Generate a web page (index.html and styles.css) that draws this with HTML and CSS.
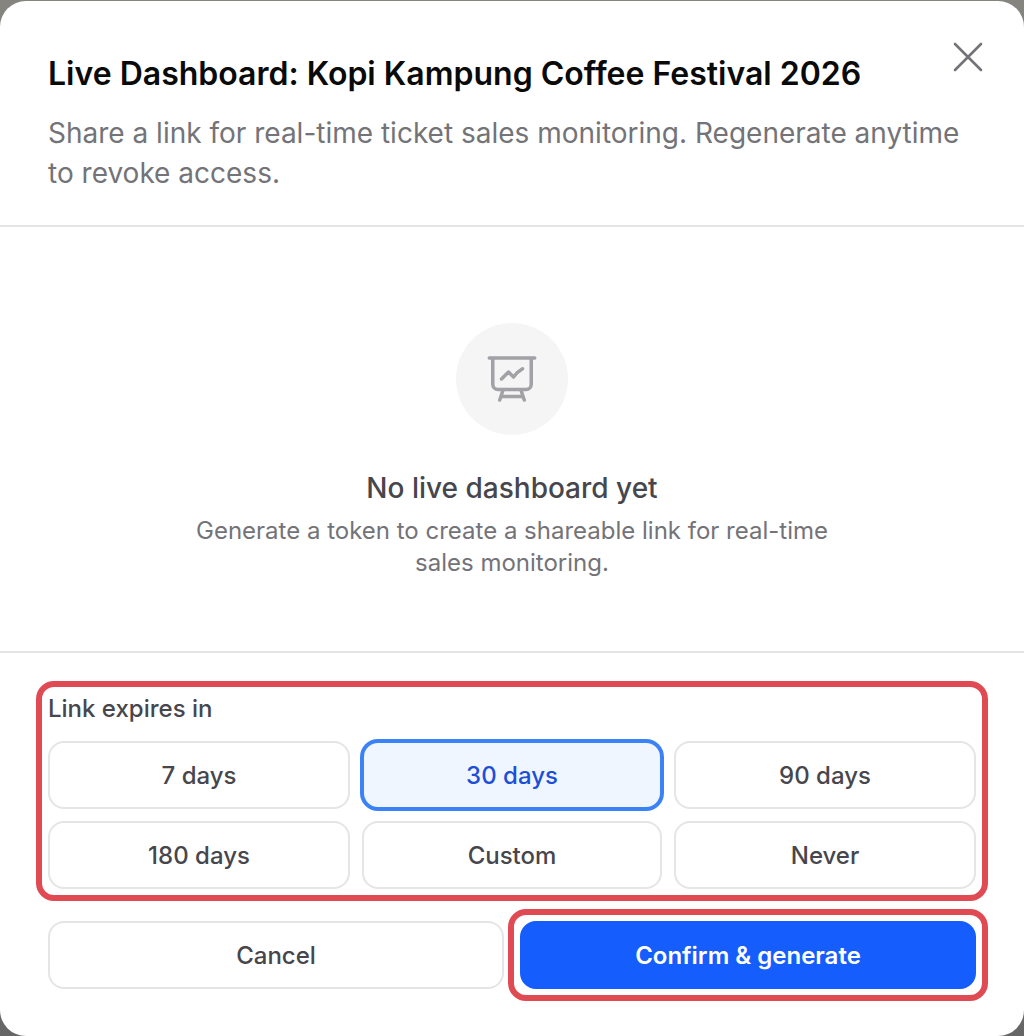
FILE: index.html
```html
<!DOCTYPE html>
<html lang="en">
<head>
<meta charset="utf-8">
<title>Live Dashboard</title>
<link rel="stylesheet" href="styles.css">
</head>
<body>
<div class="modal">
  <header class="modal-header">
    <h1 class="modal-title">Live Dashboard: Kopi Kampung Coffee Festival 2026</h1>
    <p class="modal-subtitle">Share a link for real-time ticket sales monitoring. Regenerate anytime to revoke access.</p>
    <button class="close" type="button" aria-label="Close">
      <svg viewBox="0 0 32 32" width="32" height="32" fill="none" stroke="currentColor" stroke-width="2.6" stroke-linecap="round"><path d="M3 3l26 26M29 3L3 29"/></svg>
    </button>
  </header>
  <main class="empty">
    <div class="empty-icon">
      <svg viewBox="0 0 24 24" width="56" height="56" fill="none" stroke="currentColor" stroke-width="1.5" stroke-linecap="round" stroke-linejoin="round"><path d="M3.75 3v11.25A2.25 2.25 0 0 0 6 16.5h2.25M3.75 3h-1.5m1.5 0h16.5m0 0h1.5m-1.5 0v11.25A2.25 2.25 0 0 1 18 16.5h-2.25m-7.5 0h7.5m-7.5 0-1 3m8.5-3 1 3m0 0 .5 1.5m-.5-1.5h-9.5m0 0-.5 1.5m.75-9 3-3 2.148 2.148A12.061 12.061 0 0 1 16.5 7.605"/></svg>
    </div>
    <h2 class="empty-title">No live dashboard yet</h2>
    <p class="empty-text">Generate a token to create a shareable link for real-time sales monitoring.</p>
  </main>
  <footer class="modal-footer">
    <section class="expiry marked">
      <div class="expiry-label">Link expires in</div>
      <div class="expiry-grid">
        <button class="btn" type="button">7 days</button>
        <button class="btn selected" type="button">30 days</button>
        <button class="btn" type="button">90 days</button>
        <button class="btn" type="button">180 days</button>
        <button class="btn" type="button">Custom</button>
        <button class="btn" type="button">Never</button>
      </div>
    </section>
    <div class="actions">
      <button class="btn" type="button">Cancel</button>
      <button class="btn primary marked" type="button">Confirm &amp; generate</button>
    </div>
  </footer>
</div>
</body>
</html>
```

FILE: styles.css
```css
* { box-sizing: border-box; }
html, body { height: 100%; }
body {
  margin: 0;
  height: 1036px;
  overflow: hidden;
  background: linear-gradient(180deg, #85847e 0%, #666666 100%);
  font-family: Inter, "Liberation Sans", sans-serif;
  padding-top: 1px;
}
.modal {
  width: 1024px;
  height: 1035px;
  background: #fff;
  border-radius: 26px;
  overflow: hidden;
  display: flex;
  flex-direction: column;
}
.modal-header {
  position: relative;
  padding: 48px 48px 32px;
  border-bottom: 2px solid #e5e5e5;
  display: flex;
  flex-direction: column;
  gap: 14px;
}
.modal-title {
  margin: 0;
  font-size: 32px;
  line-height: 50px;
  font-weight: 600;
  color: #0a0a0a;
}
.modal-subtitle {
  margin: 0;
  font-size: 28px;
  line-height: 40px;
  color: #737378;
}
.close {
  position: absolute;
  top: 40px;
  right: 40px;
  width: 32px;
  height: 32px;
  padding: 0;
  border: 0;
  background: none;
  color: #737378;
}
.close svg { display: block; }
.empty {
  flex: 1;
  padding: 96px 48px 72px;
  display: flex;
  flex-direction: column;
  align-items: center;
  text-align: center;
}
.empty-icon {
  width: 112px;
  height: 112px;
  border-radius: 50%;
  background: #f5f5f5;
  color: #a1a1a6;
  display: flex;
  align-items: center;
  justify-content: center;
  margin-bottom: 32px;
}
.empty-title {
  margin: 0 0 6px;
  font-size: 28px;
  line-height: 42px;
  font-weight: 500;
  color: #46464c;
}
.empty-text {
  margin: 0;
  max-width: 672px;
  font-size: 24px;
  line-height: 32px;
  color: #737378;
}
.modal-footer {
  padding: 40px 48px 47px;
  border-top: 2px solid #e5e5e5;
  display: flex;
  flex-direction: column;
  gap: 32px;
}
.expiry {
  display: flex;
  flex-direction: column;
  gap: 16px;
}
.expiry-label {
  font-size: 24px;
  line-height: 32px;
  font-weight: 450;
  color: #46464c;
}
.expiry-grid {
  display: grid;
  grid-template-columns: 302px 1fr 302px;
  gap: 12px;
}
.btn {
  height: 68px;
  border: 2px solid #e5e5e5;
  border-radius: 16px;
  background: #fff;
  font-family: inherit;
  font-size: 24px;
  font-weight: 450;
  color: #46464c;
  padding: 0;
}
.btn.selected {
  border-color: #3b82f6;
  box-shadow: 0 0 0 2px #3b82f6;
  background: #eff6ff;
  color: #1d4ed8;
}
.actions {
  display: grid;
  grid-template-columns: 1fr 1fr;
  gap: 16px;
}
.btn.primary {
  border-color: #155dfc;
  background: #155dfc;
  color: #fff;
  font-weight: 600;
}
.marked { position: relative; }
.marked::after {
  content: "";
  position: absolute;
  inset: -12px;
  border: 6px solid #e04b53;
  border-radius: 18px;
  pointer-events: none;
}
.btn.marked::after { inset: -14px; }
```
